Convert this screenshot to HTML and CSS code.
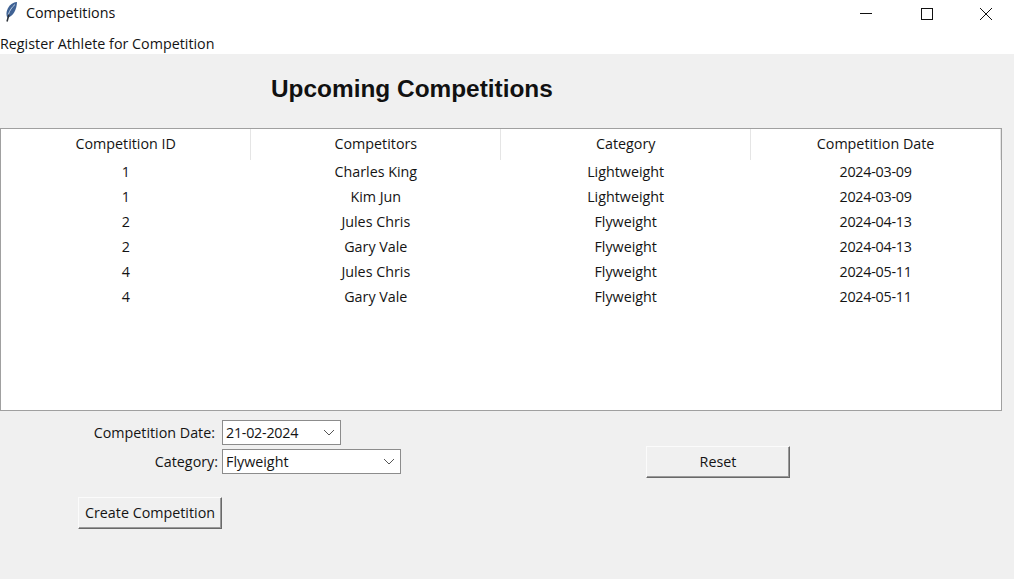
FILE: index.html
```html
<!DOCTYPE html>
<html>
<head>
  <title>Competitions</title>
  <link rel="stylesheet" href="styles.css">
</head>
<body>

  <!-- Window title bar -->
  <div class="titlebar">
    <svg class="app-icon" width="16" height="22" viewBox="0 0 16 22">
      <path d="M14 1C8.5 1.5 4.5 6 3.6 11C3.2 13.5 3.6 15.5 4.6 16.8C10 15.5 13.8 8.5 14 1Z" fill="#3f6294"/>
      <path d="M12 3.5C9 6 6.5 9.5 5.2 14" stroke="#b9cbe2" stroke-width="1" fill="none"/>
      <path d="M6 13.5L4 20.5" stroke="#2c3138" stroke-width="1.5" fill="none"/>
    </svg>
    <span class="window-title">Competitions</span>
    <div class="window-controls">
      <svg width="14" height="14" viewBox="0 0 14 14"><path d="M1 6.5H13" stroke="#111" stroke-width="1"/></svg>
      <svg class="max-icon" width="14" height="14" viewBox="0 0 14 14"><rect x="1.5" y="1.5" width="11" height="11" fill="none" stroke="#111" stroke-width="1"/></svg>
      <svg width="14" height="14" viewBox="0 0 14 14"><path d="M1 1L13 13M13 1L1 13" stroke="#111" stroke-width="1"/></svg>
    </div>
  </div>

  <div class="menubar">Register Athlete for Competition</div>

  <div class="content">
    <h1>Upcoming Competitions</h1>

    <div class="tree">
      <table>
        <thead>
          <tr>
            <th>Competition ID</th>
            <th>Competitors</th>
            <th>Category</th>
            <th>Competition Date</th>
          </tr>
        </thead>
        <tbody>
          <tr><td>1</td><td>Charles King</td><td>Lightweight</td><td class="date">2024-03-09</td></tr>
          <tr><td>1</td><td>Kim Jun</td><td>Lightweight</td><td class="date">2024-03-09</td></tr>
          <tr><td>2</td><td>Jules Chris</td><td>Flyweight</td><td class="date">2024-04-13</td></tr>
          <tr><td>2</td><td>Gary Vale</td><td>Flyweight</td><td class="date">2024-04-13</td></tr>
          <tr><td>4</td><td>Jules Chris</td><td>Flyweight</td><td class="date">2024-05-11</td></tr>
          <tr><td>4</td><td>Gary Vale</td><td>Flyweight</td><td class="date">2024-05-11</td></tr>
        </tbody>
      </table>
    </div>

    <div class="form-area">
      <div class="form-left">
        <div class="form-row">
          <label class="date-label">Competition Date:</label>
          <div class="combo date-combo">
            <span class="date">21-02-2024</span>
            <svg width="12" height="7" viewBox="0 0 12 7"><path d="M1 1L6 6L11 1" stroke="#555" stroke-width="1" fill="none"/></svg>
          </div>
        </div>
        <div class="form-row">
          <label>Category:</label>
          <div class="combo category-combo">
            <span>Flyweight</span>
            <svg width="12" height="7" viewBox="0 0 12 7"><path d="M1 1L6 6L11 1" stroke="#555" stroke-width="1" fill="none"/></svg>
          </div>
        </div>
        <button class="btn create-btn">Create Competition</button>
      </div>
      <button class="btn reset-btn">Reset</button>
    </div>
  </div>

</body>
</html>
```

FILE: styles.css
```css
* {
  box-sizing: border-box;
}

body {
  font-family: 'Open Sans', 'Noto Sans', sans-serif;
  font-size: 14.3px;
  color: #141414;
  background-color: #f0f0f0;
  margin: 0;
  height: 579px;
  overflow: hidden;
}

/* Title bar */
.titlebar {
  display: flex;
  align-items: center;
  height: 30px;
  background-color: white;
  padding-left: 3px;
  padding-bottom: 6px;
}

.app-icon {
  margin-right: 7px;
}

.window-title {
  color: #111;
}

.window-controls {
  display: flex;
  gap: 46px;
  margin-left: auto;
  margin-right: 21px;
  padding-top: 4px;
}

.max-icon {
  margin-left: 1px;
  margin-right: -1px;
}

.menubar {
  height: 24px;
  line-height: 28px;
  background-color: white;
  white-space: nowrap;
}

/* Main area */
.content {
  background-color: #f0f0f0;
}

h1 {
  font-family: 'Liberation Sans', Arial, sans-serif;
  font-size: 24.4px;
  font-weight: bold;
  color: #111;
  margin: 0;
  height: 74px;
  padding: 20px 0 0 271px;
  line-height: 29px;
}

.tree {
  width: 1002px;
  height: 283px;
  background-color: white;
  border: 1px solid #a0a0a0;
}

table {
  width: 1000px;
  table-layout: fixed;
  border-collapse: collapse;
}

th {
  height: 31px;
  padding: 0 0 2px;
  font-weight: normal;
  text-align: center;
  border-right: 1px solid #e5e5e5;
}

td {
  height: 25px;
  padding: 0 0 2px;
  text-align: center;
}

.date {
  letter-spacing: -0.25px;
}

/* Form under the table */
.form-area {
  display: flex;
  align-items: flex-start;
  padding-top: 9px;
}

.form-left {
  width: 646px;
}

.form-row {
  display: flex;
  align-items: center;
  margin-bottom: 4px;
}

.form-row label {
  width: 222px;
  text-align: right;
  padding-right: 4px;
}

.form-row .date-label {
  padding-right: 7px;
}

.combo {
  display: flex;
  align-items: center;
  justify-content: space-between;
  height: 25px;
  background-color: white;
  border: 1px solid #8c8c8c;
  padding: 0 5px 0 3px;
}

.date-combo {
  width: 119px;
}

.category-combo {
  width: 179px;
}

.btn {
  display: block;
  font: inherit;
  color: inherit;
  width: 144px;
  height: 32px;
  padding: 0 0 2px;
  background-color: #f0f0f0;
  border: 1px solid;
  border-color: #fbfbfb #696969 #696969 #fbfbfb;
  box-shadow: inset -1px -1px 0 #9a9a9a;
}

.create-btn {
  margin: 23px 0 0 78px;
}

.reset-btn {
  margin-top: 26px;
}
```
